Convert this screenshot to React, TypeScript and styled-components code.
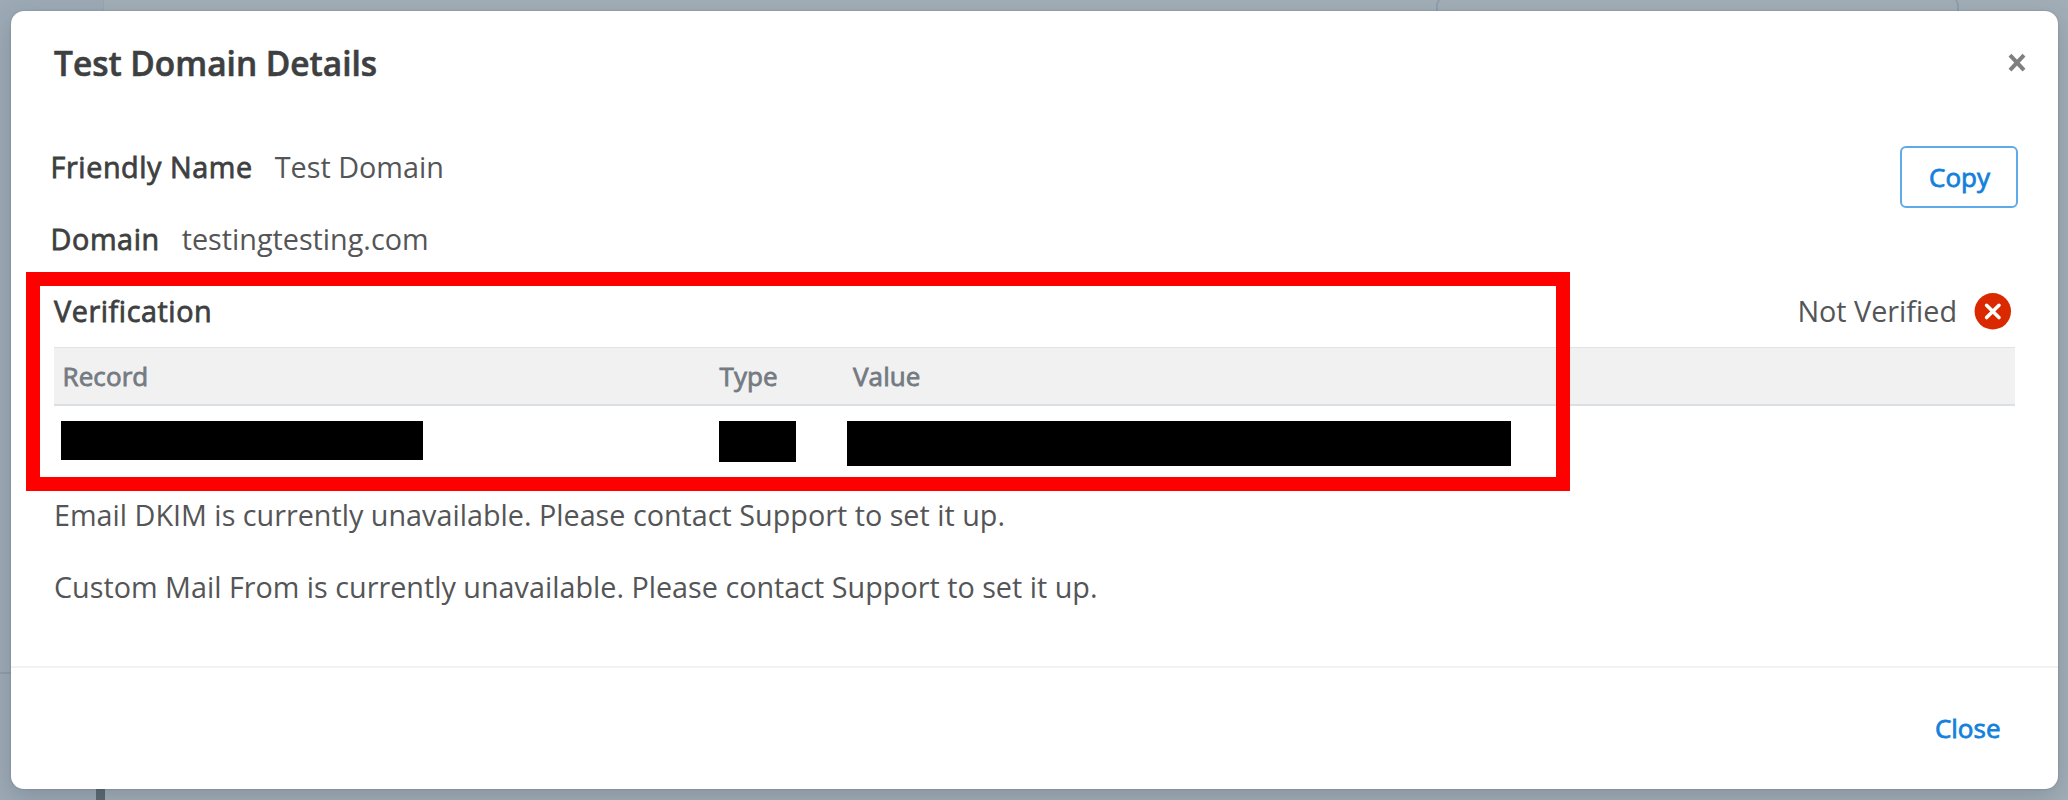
import React from "react";
import styled, { createGlobalStyle, css } from "styled-components";

const GlobalStyle = createGlobalStyle`
  *, *::before, *::after { box-sizing: border-box; }
  body {
    margin: 0;
    overflow: hidden;
    background: #a1adb7;
    color: #545557;
    font-family: "Open Sans", "Noto Sans", sans-serif;
    font-size: 28.75px;
  }
`;

/* Medium weight: between the regular and semibold faces. */
const medium = css`
  font-weight: 400;
  -webkit-text-stroke: 0.8px currentColor;
`;

const Page = styled.div`
  position: relative;
  display: flex;
  width: 2068px;
  height: 800px;
  background: #a2aeb7;
`;

const Sidebar = styled.div`
  display: flex;
  flex-direction: column;
  justify-content: space-between;
  align-items: flex-end;
  width: 104px;
  background: #9daab6;
  border-right: 1px solid #98a5b1;
`;

const SidebarSection = styled.div`
  width: 100%;
  height: 674px;
  border-bottom: 2px solid #909da8;
`;

const SidebarHandle = styled.div`
  width: 9px;
  height: 30px;
  margin-right: -2px;
  background: #5d6973;
`;

const Content = styled.div`
  display: flex;
  flex: 1;
  justify-content: flex-end;
  padding-right: 109px;
`;

const ContentCard = styled.div`
  width: 523px;
  height: 300px;
  margin-top: -3px;
  border: 2px solid #919eac;
  border-radius: 8px;
`;

const Modal = styled.div`
  position: absolute;
  top: 11px;
  left: 11px;
  display: flex;
  flex-direction: column;
  width: 2047px;
  height: 777.5px;
  background: #fff;
  border-radius: 13px;
  box-shadow: 0 8px 24px rgba(30, 45, 60, 0.2), 0 0 2px rgba(30, 45, 60, 0.25);
`;

const ModalHeader = styled.header`
  display: flex;
  align-items: center;
  justify-content: space-between;
  height: 103px;
  padding: 0 31px 0 43px;
`;

const Title = styled.h1`
  margin: 0;
  padding-top: 1px;
  color: #3e3f41;
  font-size: 33.45px;
  font-weight: 600;
  -webkit-text-stroke: 0.6px currentColor;
`;

const DismissButton = styled.button`
  display: flex;
  margin: 0;
  padding: 0;
  border: 0;
  background: none;
`;

const ModalBody = styled.main`
  flex: 1;
  padding: 16px 43px 0;
`;

const Summary = styled.section`
  display: flex;
  justify-content: space-between;
  align-items: flex-start;
  margin: 0 -3px 0 -3.4px;
`;

const Field = styled.div`
  display: flex;
  align-items: center;
  gap: 22px;
  height: 72px;
`;

const Label = styled.span`
  ${medium}
  color: #3e3f41;
  letter-spacing: 0.57px;
`;

const CopyButton = styled.button`
  ${medium}
  width: 118px;
  height: 62px;
  margin: 16px 0 0;
  padding: 0 0 1px 1px;
  border: 2px solid #5faae8;
  border-radius: 6px;
  background: #fff;
  color: #1381dc;
  font-family: inherit;
  font-size: 26px;
`;

const Verification = styled.section`
  position: relative;
`;

const SectionHeading = styled.div`
  display: flex;
  align-items: center;
  justify-content: space-between;
  height: 72px;
  margin-bottom: 1px;
  padding-right: 4px;
`;

const Status = styled.div`
  display: flex;
  align-items: center;
  gap: 17px;
`;

const TableHead = styled.div`
  ${medium}
  display: grid;
  grid-template-columns: 657px 133.5px 1fr;
  align-items: center;
  height: 59px;
  padding-left: 8.5px;
  border-top: 1px solid #dfe3e8;
  border-bottom: 2px solid #dbe0e4;
  background: #f1f1f1;
  color: #747b82;
  font-size: 26px;
  letter-spacing: 0.1px;
`;

const TableRow = styled.div`
  display: grid;
  grid-template-columns: 658px 128px 1fr;
  align-items: start;
  height: 72.5px;
  padding: 15px 0 0 7px;
`;

const Redacted = styled.div<{ $width: number; $height: number }>`
  width: ${(p) => p.$width}px;
  height: ${(p) => p.$height}px;
  background: #000;
`;

const Highlight = styled.div`
  position: absolute;
  top: -2px;
  left: -28px;
  width: 1544px;
  height: 219px;
  border: 14px solid #f00;
`;

const Note = styled.p`
  display: flex;
  align-items: center;
  height: 72px;
  margin: 0;
`;

const ModalFooter = styled.footer`
  display: flex;
  align-items: center;
  justify-content: flex-end;
  height: 122.5px;
  padding-right: 57.5px;
  border-top: 2px solid #f1f2f3;
`;

const TextButton = styled.button`
  ${medium}
  margin: 0;
  padding: 0;
  border: 0;
  background: none;
  color: #1381dc;
  font-family: inherit;
  font-size: 26px;
`;

const NotVerifiedIcon = () => (
  <svg width="37" height="37" viewBox="0 0 37 37" overflow="visible">
    <circle cx="18.8" cy="19.3" r="18.2" fill="#da2900" />
    <path d="M12.6 13.3 25 25.5M25 13.3 12.6 25.5" stroke="#fff" strokeWidth="3.6" strokeLinecap="round" />
  </svg>
);

const DismissIcon = () => (
  <svg width="20" height="20" viewBox="0 0 20 20">
    <path d="M3 2.2 17 17.2M17 2.2 3 17.2" stroke="#7f7f7f" strokeWidth="4" strokeLinecap="butt" />
  </svg>
);

export default function App() {
  return (
    <Page>
      <GlobalStyle />
      <Sidebar>
        <SidebarSection />
        <SidebarHandle />
      </Sidebar>
      <Content>
        <ContentCard />
      </Content>
      <Modal role="dialog">
        <ModalHeader>
          <Title>Test Domain Details</Title>
          <DismissButton>
            <DismissIcon />
          </DismissButton>
        </ModalHeader>
        <ModalBody>
          <Summary>
            <div>
              <Field>
                <Label>Friendly Name</Label>
                <span>Test Domain</span>
              </Field>
              <Field>
                <Label>Domain</Label>
                <span>testingtesting.com</span>
              </Field>
            </div>
            <CopyButton>Copy</CopyButton>
          </Summary>
          <Verification>
            <SectionHeading>
              <Label>Verification</Label>
              <Status>
                Not Verified
                <NotVerifiedIcon />
              </Status>
            </SectionHeading>
            <TableHead>
              <span>Record</span>
              <span>Type</span>
              <span>Value</span>
            </TableHead>
            <TableRow>
              <Redacted $width={362} $height={39} />
              <Redacted $width={77} $height={41} />
              <Redacted $width={664} $height={45} />
            </TableRow>
            <Highlight />
          </Verification>
          <Note>Email DKIM is currently unavailable. Please contact Support to set it up.</Note>
          <Note>Custom Mail From is currently unavailable. Please contact Support to set it up.</Note>
        </ModalBody>
        <ModalFooter>
          <TextButton>Close</TextButton>
        </ModalFooter>
      </Modal>
    </Page>
  );
}
